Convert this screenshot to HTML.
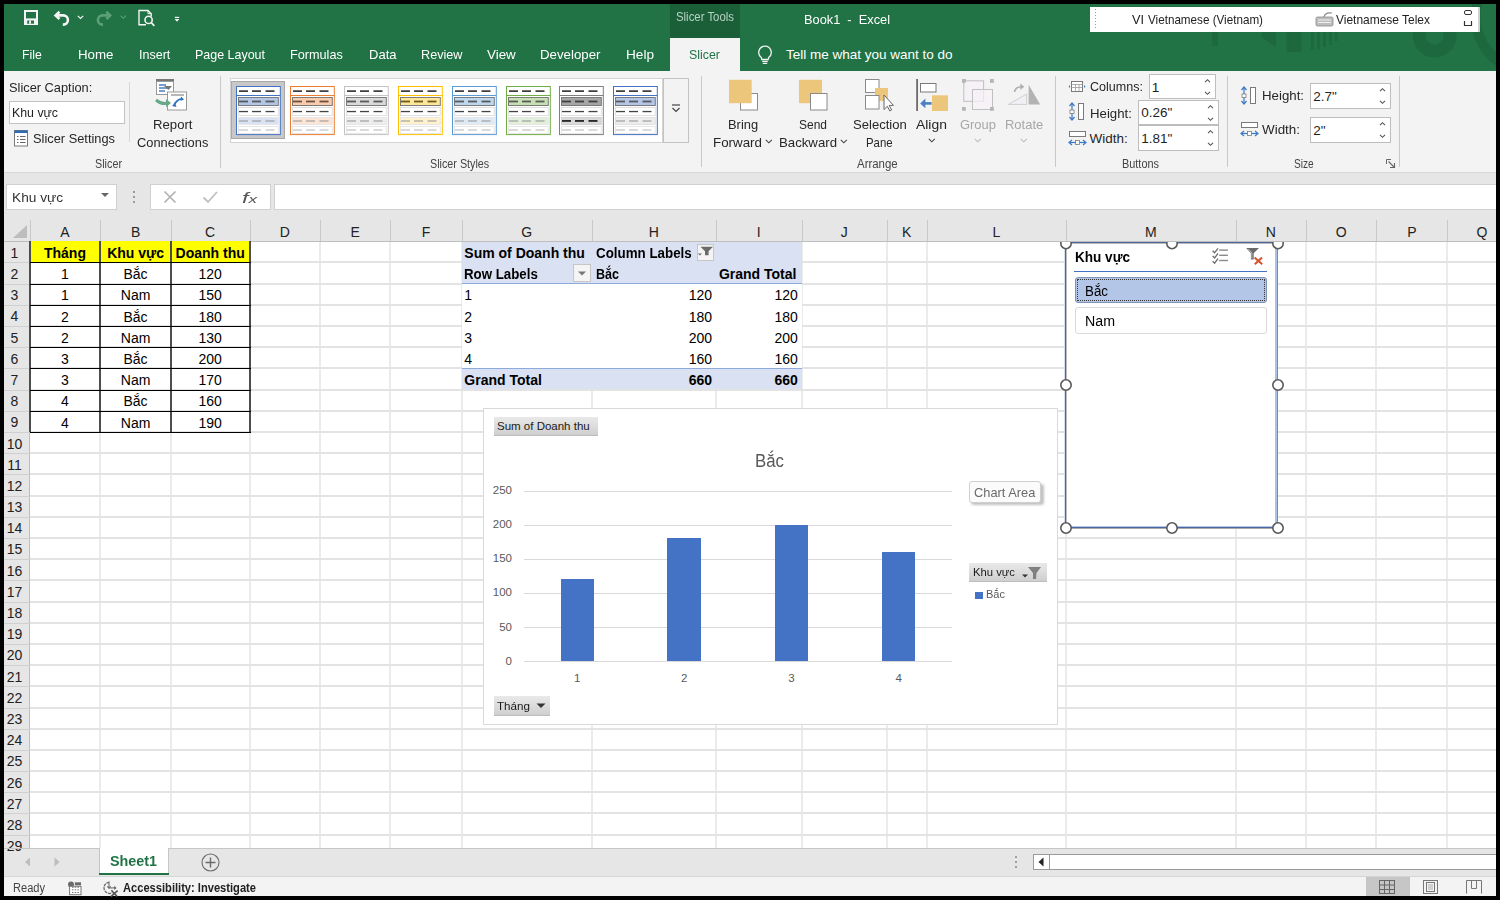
<!DOCTYPE html><html><head><meta charset="utf-8"><style>
html,body{margin:0;padding:0;}
body{width:1500px;height:900px;overflow:hidden;position:relative;background:#000;font-family:"Liberation Sans", sans-serif;}
.a{position:absolute;box-sizing:border-box;}
svg.a{overflow:visible;}
.t{position:absolute;white-space:nowrap;transform-origin:0 0;font-family:"Liberation Sans", sans-serif;}
</style></head><body>
<div class="a" style="left:4.00px;top:4.00px;width:1492.00px;height:67.00px;background:#217346"></div>
<svg class="a" style="left:1150px;top:4px" width="346" height="67" viewBox="0 0 346 67"><circle cx="284.6" cy="31.5" r="15.5" fill="none" stroke="#1e6840" stroke-width="13"/><rect x="46.8" y="22" width="4" height="4" fill="#1e6840"/><rect x="61.8" y="22" width="6" height="20" fill="#1e6840"/><path d="M111.5 22 H126 V43 L111.5 33 Z" fill="#1e6840"/><rect x="136.5" y="22" width="15" height="26" fill="#1e6840"/><rect x="161" y="22" width="3" height="24" fill="#1e6840"/><rect x="167" y="22" width="3" height="23" fill="#1e6840"/><rect x="173" y="22" width="3" height="21" fill="#1e6840"/><rect x="179" y="22" width="3" height="19" fill="#1e6840"/><rect x="185" y="22" width="2.5" height="15" fill="#1e6840"/><path d="M322 0 A60 60 0 0 0 346 62 L346 48 A48 48 0 0 1 332 0 Z" fill="#1e6840"/></svg>
<div class="a" style="left:670.00px;top:4.00px;width:70.00px;height:34.00px;background:#1b5f39"></div>
<div class="a" style="left:670.00px;top:38.00px;width:70.00px;height:33.00px;background:#f3f3f3"></div>
<div class="a" style="left:4.00px;top:71.00px;width:1492.00px;height:101.00px;background:#f3f3f3"></div>
<div class="a" style="left:4.00px;top:172.00px;width:1492.00px;height:1.00px;background:#d6d6d6"></div>
<div class="a" style="left:4.00px;top:173.00px;width:1492.00px;height:68.00px;background:#e6e6e6"></div>
<div class="a" style="left:4.00px;top:241.00px;width:25.50px;height:607.00px;background:#e6e6e6"></div>
<div class="a" style="left:29.50px;top:241.00px;width:1466.50px;height:607.00px;background:#ffffff"></div>
<div class="a" style="left:4.00px;top:848.00px;width:1492.00px;height:28.00px;background:#e6e6e6"></div>
<div class="a" style="left:4.00px;top:876.00px;width:1492.00px;height:20.00px;background:#f3f3f3"></div>
<span class="t" style="left:676.00px;top:11.34px;font-size:12px;line-height:12px;font-weight:400;color:#b7d3c2;transform:scaleX(0.9486);">Slicer Tools</span>
<span class="t" style="left:804.00px;top:12.57px;font-size:13.5px;line-height:13.5px;font-weight:400;color:#ffffff;transform:scaleX(0.9472);">Book1&nbsp;&nbsp;-&nbsp;&nbsp;Excel</span>
<div class="a" style="left:1090.00px;top:6.50px;width:390.00px;height:25.00px;background:#ffffff;border-right:2px solid #d0d0d0"></div>
<span class="t" style="left:1131.50px;top:13.00px;font-size:13px;line-height:13px;font-weight:400;color:#222;transform:scaleX(0.9759);">VI</span>
<span class="t" style="left:1148.00px;top:13.00px;font-size:13px;line-height:13px;font-weight:400;color:#222;transform:scaleX(0.8975);">Vietnamese (Vietnam)</span>
<span class="t" style="left:1336.00px;top:13.00px;font-size:13px;line-height:13px;font-weight:400;color:#222;transform:scaleX(0.9203);">Vietnamese Telex</span>
<span class="t" style="left:22.30px;top:47.57px;font-size:13.5px;line-height:13.5px;font-weight:400;color:#ffffff;transform:scaleX(0.9051);">File</span>
<span class="t" style="left:78.00px;top:47.57px;font-size:13.5px;line-height:13.5px;font-weight:400;color:#ffffff;transform:scaleX(0.9857);">Home</span>
<span class="t" style="left:138.70px;top:47.57px;font-size:13.5px;line-height:13.5px;font-weight:400;color:#ffffff;transform:scaleX(0.9270);">Insert</span>
<span class="t" style="left:195.00px;top:47.57px;font-size:13.5px;line-height:13.5px;font-weight:400;color:#ffffff;transform:scaleX(0.9233);">Page Layout</span>
<span class="t" style="left:290.40px;top:47.57px;font-size:13.5px;line-height:13.5px;font-weight:400;color:#ffffff;transform:scaleX(0.9384);">Formulas</span>
<span class="t" style="left:368.50px;top:47.57px;font-size:13.5px;line-height:13.5px;font-weight:400;color:#ffffff;transform:scaleX(0.9639);">Data</span>
<span class="t" style="left:421.30px;top:47.57px;font-size:13.5px;line-height:13.5px;font-weight:400;color:#ffffff;transform:scaleX(0.9375);">Review</span>
<span class="t" style="left:486.80px;top:47.57px;font-size:13.5px;line-height:13.5px;font-weight:400;color:#ffffff;transform:scaleX(0.9920);">View</span>
<span class="t" style="left:540.30px;top:47.57px;font-size:13.5px;line-height:13.5px;font-weight:400;color:#ffffff;transform:scaleX(0.9830);">Developer</span>
<span class="t" style="left:626.00px;top:47.57px;font-size:13.5px;line-height:13.5px;font-weight:400;color:#ffffff;transform:scaleX(1.0084);">Help</span>
<span class="t" style="left:689.00px;top:47.57px;font-size:13.5px;line-height:13.5px;font-weight:400;color:#217346;transform:scaleX(0.9181);">Slicer</span>
<span class="t" style="left:786.00px;top:47.57px;font-size:13.5px;line-height:13.5px;font-weight:400;color:#ffffff;">Tell me what you want to do</span>
<div class="a" style="left:99.00px;top:241.00px;width:2.00px;height:607.00px;background:#ebebeb"></div>
<div class="a" style="left:170.00px;top:241.00px;width:2.00px;height:607.00px;background:#ebebeb"></div>
<div class="a" style="left:249.00px;top:241.00px;width:2.00px;height:607.00px;background:#ebebeb"></div>
<div class="a" style="left:319.00px;top:241.00px;width:2.00px;height:607.00px;background:#ebebeb"></div>
<div class="a" style="left:389.00px;top:241.00px;width:2.00px;height:607.00px;background:#ebebeb"></div>
<div class="a" style="left:461.00px;top:241.00px;width:2.00px;height:607.00px;background:#ebebeb"></div>
<div class="a" style="left:591.00px;top:241.00px;width:2.00px;height:607.00px;background:#ebebeb"></div>
<div class="a" style="left:715.00px;top:241.00px;width:2.00px;height:607.00px;background:#ebebeb"></div>
<div class="a" style="left:801.00px;top:241.00px;width:2.00px;height:607.00px;background:#ebebeb"></div>
<div class="a" style="left:886.00px;top:241.00px;width:2.00px;height:607.00px;background:#ebebeb"></div>
<div class="a" style="left:926.00px;top:241.00px;width:2.00px;height:607.00px;background:#ebebeb"></div>
<div class="a" style="left:1065.00px;top:241.00px;width:2.00px;height:607.00px;background:#ebebeb"></div>
<div class="a" style="left:1235.00px;top:241.00px;width:2.00px;height:607.00px;background:#ebebeb"></div>
<div class="a" style="left:1305.00px;top:241.00px;width:2.00px;height:607.00px;background:#ebebeb"></div>
<div class="a" style="left:1375.00px;top:241.00px;width:2.00px;height:607.00px;background:#ebebeb"></div>
<div class="a" style="left:1446.00px;top:241.00px;width:2.00px;height:607.00px;background:#ebebeb"></div>
<div class="a" style="left:29.50px;top:261.00px;width:1466.50px;height:2.00px;background:#e3e3e3"></div>
<div class="a" style="left:29.50px;top:283.00px;width:1466.50px;height:2.00px;background:#e3e3e3"></div>
<div class="a" style="left:29.50px;top:304.00px;width:1466.50px;height:2.00px;background:#e3e3e3"></div>
<div class="a" style="left:29.50px;top:325.00px;width:1466.50px;height:2.00px;background:#e3e3e3"></div>
<div class="a" style="left:29.50px;top:346.00px;width:1466.50px;height:2.00px;background:#e3e3e3"></div>
<div class="a" style="left:29.50px;top:367.00px;width:1466.50px;height:2.00px;background:#e3e3e3"></div>
<div class="a" style="left:29.50px;top:389.00px;width:1466.50px;height:2.00px;background:#e3e3e3"></div>
<div class="a" style="left:29.50px;top:410.00px;width:1466.50px;height:2.00px;background:#e3e3e3"></div>
<div class="a" style="left:29.50px;top:431.00px;width:1466.50px;height:2.00px;background:#e3e3e3"></div>
<div class="a" style="left:29.50px;top:452.00px;width:1466.50px;height:2.00px;background:#e3e3e3"></div>
<div class="a" style="left:29.50px;top:473.00px;width:1466.50px;height:2.00px;background:#e3e3e3"></div>
<div class="a" style="left:29.50px;top:495.00px;width:1466.50px;height:2.00px;background:#e3e3e3"></div>
<div class="a" style="left:29.50px;top:516.00px;width:1466.50px;height:2.00px;background:#e3e3e3"></div>
<div class="a" style="left:29.50px;top:537.00px;width:1466.50px;height:2.00px;background:#e3e3e3"></div>
<div class="a" style="left:29.50px;top:558.00px;width:1466.50px;height:2.00px;background:#e3e3e3"></div>
<div class="a" style="left:29.50px;top:579.00px;width:1466.50px;height:2.00px;background:#e3e3e3"></div>
<div class="a" style="left:29.50px;top:601.00px;width:1466.50px;height:2.00px;background:#e3e3e3"></div>
<div class="a" style="left:29.50px;top:622.00px;width:1466.50px;height:2.00px;background:#e3e3e3"></div>
<div class="a" style="left:29.50px;top:643.00px;width:1466.50px;height:2.00px;background:#e3e3e3"></div>
<div class="a" style="left:29.50px;top:664.00px;width:1466.50px;height:2.00px;background:#e3e3e3"></div>
<div class="a" style="left:29.50px;top:685.00px;width:1466.50px;height:2.00px;background:#e3e3e3"></div>
<div class="a" style="left:29.50px;top:707.00px;width:1466.50px;height:2.00px;background:#e3e3e3"></div>
<div class="a" style="left:29.50px;top:728.00px;width:1466.50px;height:2.00px;background:#e3e3e3"></div>
<div class="a" style="left:29.50px;top:749.00px;width:1466.50px;height:2.00px;background:#e3e3e3"></div>
<div class="a" style="left:29.50px;top:770.00px;width:1466.50px;height:2.00px;background:#e3e3e3"></div>
<div class="a" style="left:29.50px;top:791.00px;width:1466.50px;height:2.00px;background:#e3e3e3"></div>
<div class="a" style="left:29.50px;top:812.00px;width:1466.50px;height:2.00px;background:#e3e3e3"></div>
<div class="a" style="left:29.50px;top:834.00px;width:1466.50px;height:2.00px;background:#e3e3e3"></div>
<div class="a" style="left:29.50px;top:220.00px;width:1.00px;height:21.00px;background:#c8c8c8"></div>
<div class="a" style="left:99.50px;top:220.00px;width:1.00px;height:21.00px;background:#c8c8c8"></div>
<div class="a" style="left:170.50px;top:220.00px;width:1.00px;height:21.00px;background:#c8c8c8"></div>
<div class="a" style="left:249.50px;top:220.00px;width:1.00px;height:21.00px;background:#c8c8c8"></div>
<div class="a" style="left:319.50px;top:220.00px;width:1.00px;height:21.00px;background:#c8c8c8"></div>
<div class="a" style="left:389.50px;top:220.00px;width:1.00px;height:21.00px;background:#c8c8c8"></div>
<div class="a" style="left:461.50px;top:220.00px;width:1.00px;height:21.00px;background:#c8c8c8"></div>
<div class="a" style="left:591.50px;top:220.00px;width:1.00px;height:21.00px;background:#c8c8c8"></div>
<div class="a" style="left:715.50px;top:220.00px;width:1.00px;height:21.00px;background:#c8c8c8"></div>
<div class="a" style="left:801.50px;top:220.00px;width:1.00px;height:21.00px;background:#c8c8c8"></div>
<div class="a" style="left:886.50px;top:220.00px;width:1.00px;height:21.00px;background:#c8c8c8"></div>
<div class="a" style="left:926.50px;top:220.00px;width:1.00px;height:21.00px;background:#c8c8c8"></div>
<div class="a" style="left:1065.50px;top:220.00px;width:1.00px;height:21.00px;background:#c8c8c8"></div>
<div class="a" style="left:1235.50px;top:220.00px;width:1.00px;height:21.00px;background:#c8c8c8"></div>
<div class="a" style="left:1305.50px;top:220.00px;width:1.00px;height:21.00px;background:#c8c8c8"></div>
<div class="a" style="left:1375.50px;top:220.00px;width:1.00px;height:21.00px;background:#c8c8c8"></div>
<div class="a" style="left:1446.50px;top:220.00px;width:1.00px;height:21.00px;background:#c8c8c8"></div>
<div class="a" style="left:4.00px;top:240.50px;width:1492.00px;height:1.00px;background:#bdbdbd"></div>
<div class="a" style="left:29.00px;top:241.00px;width:1.00px;height:607.00px;background:#bdbdbd"></div>
<svg class="a" style="left:12px;top:225px;" width="16" height="14" viewBox="0 0 16 14"><path d="M15 0 L15 13 L1 13 Z" fill="#bdbdbd"/></svg>
<span class="t" style="left:60.28px;top:224.65px;font-size:14px;line-height:14px;font-weight:400;color:#222;">A</span>
<span class="t" style="left:130.88px;top:224.65px;font-size:14px;line-height:14px;font-weight:400;color:#222;">B</span>
<span class="t" style="left:205.09px;top:224.65px;font-size:14px;line-height:14px;font-weight:400;color:#222;">C</span>
<span class="t" style="left:279.74px;top:224.65px;font-size:14px;line-height:14px;font-weight:400;color:#222;">D</span>
<span class="t" style="left:350.53px;top:224.65px;font-size:14px;line-height:14px;font-weight:400;color:#222;">E</span>
<span class="t" style="left:421.72px;top:224.65px;font-size:14px;line-height:14px;font-weight:400;color:#222;">F</span>
<span class="t" style="left:521.25px;top:224.65px;font-size:14px;line-height:14px;font-weight:400;color:#222;">G</span>
<span class="t" style="left:648.69px;top:224.65px;font-size:14px;line-height:14px;font-weight:400;color:#222;">H</span>
<span class="t" style="left:756.70px;top:224.65px;font-size:14px;line-height:14px;font-weight:400;color:#222;">I</span>
<span class="t" style="left:840.65px;top:224.65px;font-size:14px;line-height:14px;font-weight:400;color:#222;">J</span>
<span class="t" style="left:901.98px;top:224.65px;font-size:14px;line-height:14px;font-weight:400;color:#222;">K</span>
<span class="t" style="left:992.50px;top:224.65px;font-size:14px;line-height:14px;font-weight:400;color:#222;">L</span>
<span class="t" style="left:1145.01px;top:224.65px;font-size:14px;line-height:14px;font-weight:400;color:#222;">M</span>
<span class="t" style="left:1265.79px;top:224.65px;font-size:14px;line-height:14px;font-weight:400;color:#222;">N</span>
<span class="t" style="left:1335.85px;top:224.65px;font-size:14px;line-height:14px;font-weight:400;color:#222;">O</span>
<span class="t" style="left:1407.23px;top:224.65px;font-size:14px;line-height:14px;font-weight:400;color:#222;">P</span>
<span class="t" style="left:1476.55px;top:224.65px;font-size:14px;line-height:14px;font-weight:400;color:#222;">Q</span>
<span class="t" style="left:10.60px;top:245.75px;font-size:14px;line-height:14px;font-weight:400;color:#222;">1</span>
<span class="t" style="left:10.60px;top:266.94px;font-size:14px;line-height:14px;font-weight:400;color:#222;">2</span>
<span class="t" style="left:10.60px;top:288.14px;font-size:14px;line-height:14px;font-weight:400;color:#222;">3</span>
<span class="t" style="left:10.60px;top:309.33px;font-size:14px;line-height:14px;font-weight:400;color:#222;">4</span>
<span class="t" style="left:10.60px;top:330.53px;font-size:14px;line-height:14px;font-weight:400;color:#222;">5</span>
<span class="t" style="left:10.60px;top:351.73px;font-size:14px;line-height:14px;font-weight:400;color:#222;">6</span>
<span class="t" style="left:10.60px;top:372.92px;font-size:14px;line-height:14px;font-weight:400;color:#222;">7</span>
<span class="t" style="left:10.60px;top:394.12px;font-size:14px;line-height:14px;font-weight:400;color:#222;">8</span>
<span class="t" style="left:10.60px;top:415.31px;font-size:14px;line-height:14px;font-weight:400;color:#222;">9</span>
<span class="t" style="left:6.71px;top:436.51px;font-size:14px;line-height:14px;font-weight:400;color:#222;">10</span>
<span class="t" style="left:7.23px;top:457.70px;font-size:14px;line-height:14px;font-weight:400;color:#222;">11</span>
<span class="t" style="left:6.71px;top:478.90px;font-size:14px;line-height:14px;font-weight:400;color:#222;">12</span>
<span class="t" style="left:6.71px;top:500.10px;font-size:14px;line-height:14px;font-weight:400;color:#222;">13</span>
<span class="t" style="left:6.71px;top:521.29px;font-size:14px;line-height:14px;font-weight:400;color:#222;">14</span>
<span class="t" style="left:6.71px;top:542.49px;font-size:14px;line-height:14px;font-weight:400;color:#222;">15</span>
<span class="t" style="left:6.71px;top:563.69px;font-size:14px;line-height:14px;font-weight:400;color:#222;">16</span>
<span class="t" style="left:6.71px;top:584.88px;font-size:14px;line-height:14px;font-weight:400;color:#222;">17</span>
<span class="t" style="left:6.71px;top:606.08px;font-size:14px;line-height:14px;font-weight:400;color:#222;">18</span>
<span class="t" style="left:6.71px;top:627.27px;font-size:14px;line-height:14px;font-weight:400;color:#222;">19</span>
<span class="t" style="left:6.71px;top:648.47px;font-size:14px;line-height:14px;font-weight:400;color:#222;">20</span>
<span class="t" style="left:6.71px;top:669.67px;font-size:14px;line-height:14px;font-weight:400;color:#222;">21</span>
<span class="t" style="left:6.71px;top:690.86px;font-size:14px;line-height:14px;font-weight:400;color:#222;">22</span>
<span class="t" style="left:6.71px;top:712.06px;font-size:14px;line-height:14px;font-weight:400;color:#222;">23</span>
<span class="t" style="left:6.71px;top:733.25px;font-size:14px;line-height:14px;font-weight:400;color:#222;">24</span>
<span class="t" style="left:6.71px;top:754.45px;font-size:14px;line-height:14px;font-weight:400;color:#222;">25</span>
<span class="t" style="left:6.71px;top:775.65px;font-size:14px;line-height:14px;font-weight:400;color:#222;">26</span>
<span class="t" style="left:6.71px;top:796.84px;font-size:14px;line-height:14px;font-weight:400;color:#222;">27</span>
<span class="t" style="left:6.71px;top:818.04px;font-size:14px;line-height:14px;font-weight:400;color:#222;">28</span>
<span class="t" style="left:6.71px;top:839.23px;font-size:14px;line-height:14px;font-weight:400;color:#222;">29</span>
<div class="a" style="left:4.00px;top:261.50px;width:25.50px;height:1.00px;background:#d0d0d0"></div>
<div class="a" style="left:4.00px;top:283.50px;width:25.50px;height:1.00px;background:#d0d0d0"></div>
<div class="a" style="left:4.00px;top:304.50px;width:25.50px;height:1.00px;background:#d0d0d0"></div>
<div class="a" style="left:4.00px;top:325.50px;width:25.50px;height:1.00px;background:#d0d0d0"></div>
<div class="a" style="left:4.00px;top:346.50px;width:25.50px;height:1.00px;background:#d0d0d0"></div>
<div class="a" style="left:4.00px;top:367.50px;width:25.50px;height:1.00px;background:#d0d0d0"></div>
<div class="a" style="left:4.00px;top:389.50px;width:25.50px;height:1.00px;background:#d0d0d0"></div>
<div class="a" style="left:4.00px;top:410.50px;width:25.50px;height:1.00px;background:#d0d0d0"></div>
<div class="a" style="left:4.00px;top:431.50px;width:25.50px;height:1.00px;background:#d0d0d0"></div>
<div class="a" style="left:4.00px;top:452.50px;width:25.50px;height:1.00px;background:#d0d0d0"></div>
<div class="a" style="left:4.00px;top:473.50px;width:25.50px;height:1.00px;background:#d0d0d0"></div>
<div class="a" style="left:4.00px;top:495.50px;width:25.50px;height:1.00px;background:#d0d0d0"></div>
<div class="a" style="left:4.00px;top:516.50px;width:25.50px;height:1.00px;background:#d0d0d0"></div>
<div class="a" style="left:4.00px;top:537.50px;width:25.50px;height:1.00px;background:#d0d0d0"></div>
<div class="a" style="left:4.00px;top:558.50px;width:25.50px;height:1.00px;background:#d0d0d0"></div>
<div class="a" style="left:4.00px;top:579.50px;width:25.50px;height:1.00px;background:#d0d0d0"></div>
<div class="a" style="left:4.00px;top:601.50px;width:25.50px;height:1.00px;background:#d0d0d0"></div>
<div class="a" style="left:4.00px;top:622.50px;width:25.50px;height:1.00px;background:#d0d0d0"></div>
<div class="a" style="left:4.00px;top:643.50px;width:25.50px;height:1.00px;background:#d0d0d0"></div>
<div class="a" style="left:4.00px;top:664.50px;width:25.50px;height:1.00px;background:#d0d0d0"></div>
<div class="a" style="left:4.00px;top:685.50px;width:25.50px;height:1.00px;background:#d0d0d0"></div>
<div class="a" style="left:4.00px;top:707.50px;width:25.50px;height:1.00px;background:#d0d0d0"></div>
<div class="a" style="left:4.00px;top:728.50px;width:25.50px;height:1.00px;background:#d0d0d0"></div>
<div class="a" style="left:4.00px;top:749.50px;width:25.50px;height:1.00px;background:#d0d0d0"></div>
<div class="a" style="left:4.00px;top:770.50px;width:25.50px;height:1.00px;background:#d0d0d0"></div>
<div class="a" style="left:4.00px;top:791.50px;width:25.50px;height:1.00px;background:#d0d0d0"></div>
<div class="a" style="left:4.00px;top:812.50px;width:25.50px;height:1.00px;background:#d0d0d0"></div>
<div class="a" style="left:4.00px;top:834.50px;width:25.50px;height:1.00px;background:#d0d0d0"></div>
<div class="a" style="left:4.00px;top:848.00px;width:1492.00px;height:1.00px;background:#c6c6c6"></div>
<div class="a" style="left:99.00px;top:848.00px;width:69.60px;height:27.00px;background:#ffffff;border-left:1px solid #c6c6c6;border-right:1px solid #c6c6c6"></div>
<div class="a" style="left:99.00px;top:873.00px;width:69.60px;height:2.00px;background:#217346"></div>
<span class="t" style="left:110.00px;top:854.15px;font-size:14px;line-height:14px;font-weight:700;color:#217346;transform:scaleX(1.0235);">Sheet1</span>
<div class="a" style="left:4.00px;top:876.00px;width:1492.00px;height:1.00px;background:#d6d6d6"></div>
<span class="t" style="left:12.50px;top:882.42px;font-size:12.5px;line-height:12.5px;font-weight:400;color:#444;transform:scaleX(0.8854);">Ready</span>
<span class="t" style="left:123.00px;top:882.42px;font-size:12.5px;line-height:12.5px;font-weight:700;color:#222;transform:scaleX(0.8904);">Accessibility: Investigate</span>
<div class="a" style="left:6.00px;top:184.00px;width:111.00px;height:25.50px;background:#fff;border:1px solid #d0d0d0"></div>
<span class="t" style="left:11.60px;top:190.57px;font-size:13.5px;line-height:13.5px;font-weight:400;color:#333;transform:scaleX(1.0137);">Khu vực</span>
<svg class="a" style="left:101px;top:193px;" width="10" height="6" viewBox="0 0 10 6"><path d="M0 0 L8 0 L4 4Z" fill="#666"/></svg>
<div class="a" style="left:133.00px;top:191.00px;width:2.00px;height:2.00px;background:#9a9a9a"></div>
<div class="a" style="left:133.00px;top:196.00px;width:2.00px;height:2.00px;background:#9a9a9a"></div>
<div class="a" style="left:133.00px;top:201.00px;width:2.00px;height:2.00px;background:#9a9a9a"></div>
<div class="a" style="left:150.00px;top:184.00px;width:120.50px;height:25.50px;background:#fff;border:1px solid #d0d0d0"></div>
<svg class="a" style="left:163px;top:190px;" width="14" height="14" viewBox="0 0 14 14"><path d="M1.5 1.5 L12.5 12.5 M12.5 1.5 L1.5 12.5" stroke="#b0b0b0" stroke-width="1.6" fill="none"/></svg>
<svg class="a" style="left:202px;top:190px;" width="16" height="14" viewBox="0 0 16 14"><path d="M1.5 7.5 L6 12 L15 2" stroke="#c0c0c0" stroke-width="1.8" fill="none"/></svg>
<span class="t" style="left:242.00px;top:190.30px;font-size:15px;line-height:15px;font-weight:400;color:#555;transform:scaleX(1.5509);font-family:"Liberation Serif",serif;"><i>f</i><i style="font-size:11px">x</i></span>
<div class="a" style="left:274.00px;top:184.00px;width:1222.00px;height:25.50px;background:#fff;border:1px solid #d0d0d0;border-right:none"></div>
<div class="a" style="left:30.00px;top:241.20px;width:219.60px;height:21.20px;background:#ffff00"></div>
<div class="a" style="left:29.00px;top:241.20px;width:2.00px;height:190.76px;background:#4d4d4d"></div>
<div class="a" style="left:99.00px;top:241.20px;width:2.00px;height:190.76px;background:#4d4d4d"></div>
<div class="a" style="left:170.00px;top:241.20px;width:2.00px;height:190.76px;background:#4d4d4d"></div>
<div class="a" style="left:249.00px;top:241.20px;width:2.00px;height:190.76px;background:#4d4d4d"></div>
<div class="a" style="left:29.50px;top:240.50px;width:221.10px;height:1.50px;background:transparent"></div>
<div class="a" style="left:29.50px;top:261.50px;width:221.10px;height:1.50px;background:#000"></div>
<div class="a" style="left:29.50px;top:283.50px;width:221.10px;height:1.50px;background:#000"></div>
<div class="a" style="left:29.50px;top:304.50px;width:221.10px;height:1.50px;background:#000"></div>
<div class="a" style="left:29.50px;top:325.50px;width:221.10px;height:1.50px;background:#000"></div>
<div class="a" style="left:29.50px;top:346.50px;width:221.10px;height:1.50px;background:#000"></div>
<div class="a" style="left:29.50px;top:367.50px;width:221.10px;height:1.50px;background:#000"></div>
<div class="a" style="left:29.50px;top:389.50px;width:221.10px;height:1.50px;background:#000"></div>
<div class="a" style="left:29.50px;top:410.50px;width:221.10px;height:1.50px;background:#000"></div>
<div class="a" style="left:29.50px;top:431.50px;width:221.10px;height:1.50px;background:#000"></div>
<span class="t" style="left:43.95px;top:245.94px;font-size:14px;line-height:14px;font-weight:700;color:#000;">Tháng</span>
<span class="t" style="left:107.14px;top:245.94px;font-size:14px;line-height:14px;font-weight:700;color:#000;">Khu vực</span>
<span class="t" style="left:175.54px;top:245.94px;font-size:14px;line-height:14px;font-weight:700;color:#000;">Doanh thu</span>
<span class="t" style="left:61.05px;top:267.14px;font-size:14px;line-height:14px;font-weight:400;color:#000;">1</span>
<span class="t" style="left:123.49px;top:267.14px;font-size:14px;line-height:14px;font-weight:400;color:#000;">Bắc</span>
<span class="t" style="left:198.47px;top:267.14px;font-size:14px;line-height:14px;font-weight:400;color:#000;">120</span>
<span class="t" style="left:61.05px;top:288.34px;font-size:14px;line-height:14px;font-weight:400;color:#000;">1</span>
<span class="t" style="left:120.77px;top:288.34px;font-size:14px;line-height:14px;font-weight:400;color:#000;">Nam</span>
<span class="t" style="left:198.47px;top:288.34px;font-size:14px;line-height:14px;font-weight:400;color:#000;">150</span>
<span class="t" style="left:61.05px;top:309.53px;font-size:14px;line-height:14px;font-weight:400;color:#000;">2</span>
<span class="t" style="left:123.49px;top:309.53px;font-size:14px;line-height:14px;font-weight:400;color:#000;">Bắc</span>
<span class="t" style="left:198.47px;top:309.53px;font-size:14px;line-height:14px;font-weight:400;color:#000;">180</span>
<span class="t" style="left:61.05px;top:330.73px;font-size:14px;line-height:14px;font-weight:400;color:#000;">2</span>
<span class="t" style="left:120.77px;top:330.73px;font-size:14px;line-height:14px;font-weight:400;color:#000;">Nam</span>
<span class="t" style="left:198.47px;top:330.73px;font-size:14px;line-height:14px;font-weight:400;color:#000;">130</span>
<span class="t" style="left:61.05px;top:351.93px;font-size:14px;line-height:14px;font-weight:400;color:#000;">3</span>
<span class="t" style="left:123.49px;top:351.93px;font-size:14px;line-height:14px;font-weight:400;color:#000;">Bắc</span>
<span class="t" style="left:198.47px;top:351.93px;font-size:14px;line-height:14px;font-weight:400;color:#000;">200</span>
<span class="t" style="left:61.05px;top:373.12px;font-size:14px;line-height:14px;font-weight:400;color:#000;">3</span>
<span class="t" style="left:120.77px;top:373.12px;font-size:14px;line-height:14px;font-weight:400;color:#000;">Nam</span>
<span class="t" style="left:198.47px;top:373.12px;font-size:14px;line-height:14px;font-weight:400;color:#000;">170</span>
<span class="t" style="left:61.05px;top:394.32px;font-size:14px;line-height:14px;font-weight:400;color:#000;">4</span>
<span class="t" style="left:123.49px;top:394.32px;font-size:14px;line-height:14px;font-weight:400;color:#000;">Bắc</span>
<span class="t" style="left:198.47px;top:394.32px;font-size:14px;line-height:14px;font-weight:400;color:#000;">160</span>
<span class="t" style="left:61.05px;top:415.51px;font-size:14px;line-height:14px;font-weight:400;color:#000;">4</span>
<span class="t" style="left:120.77px;top:415.51px;font-size:14px;line-height:14px;font-weight:400;color:#000;">Nam</span>
<span class="t" style="left:198.47px;top:415.51px;font-size:14px;line-height:14px;font-weight:400;color:#000;">190</span>
<div class="a" style="left:462.10px;top:241.70px;width:340.00px;height:41.89px;background:#d9e1f2"></div>
<div class="a" style="left:462.10px;top:283.59px;width:340.00px;height:84.78px;background:#ffffff"></div>
<div class="a" style="left:462.10px;top:283.09px;width:340.00px;height:1.20px;background:#8ea9db"></div>
<div class="a" style="left:462.10px;top:367.88px;width:340.00px;height:21.20px;background:#d9e1f2;border-top:1.2px solid #8ea9db"></div>
<span class="t" style="left:464.30px;top:245.94px;font-size:14px;line-height:14px;font-weight:700;color:#000;">Sum of Doanh thu</span>
<span class="t" style="left:595.50px;top:245.94px;font-size:14px;line-height:14px;font-weight:700;color:#000;transform:scaleX(0.9536);">Column Labels</span>
<span class="t" style="left:464.30px;top:267.14px;font-size:14px;line-height:14px;font-weight:700;color:#000;transform:scaleX(0.9486);">Row Labels</span>
<span class="t" style="left:595.50px;top:267.14px;font-size:14px;line-height:14px;font-weight:700;color:#000;transform:scaleX(0.8954);">Bắc</span>
<span class="t" style="left:718.90px;top:267.14px;font-size:14px;line-height:14px;font-weight:700;color:#000;">Grand Total</span>
<div class="a" style="left:696.70px;top:243.90px;width:17.70px;height:16.70px;background:#f4f4f4;border:1px solid #c6c6c6"></div>
<svg class="a" style="left:697px;top:245px;" width="17" height="14" viewBox="0 0 17 14"><path d="M3.5 1.8 H16 L11.6 6.3 V10.3 H8 V6.3 Z" fill="#6b6b6b"/><path d="M0.8 8.4 H5 L2.9 10.6 Z" fill="#6b6b6b"/></svg>
<div class="a" style="left:573.30px;top:264.30px;width:17.80px;height:17.80px;background:#f4f4f4;border:1px solid #c6c6c6"></div>
<svg class="a" style="left:577px;top:271.2px;" width="10" height="6" viewBox="0 0 10 6"><path d="M1 0.5 L9 0.5 L5 4.5Z" fill="#777"/></svg>
<span class="t" style="left:464.30px;top:288.34px;font-size:14px;line-height:14px;font-weight:400;color:#000;">1</span>
<span class="t" style="left:688.64px;top:288.34px;font-size:14px;line-height:14px;font-weight:400;color:#000;">120</span>
<span class="t" style="left:774.44px;top:288.34px;font-size:14px;line-height:14px;font-weight:400;color:#000;">120</span>
<span class="t" style="left:464.30px;top:309.53px;font-size:14px;line-height:14px;font-weight:400;color:#000;">2</span>
<span class="t" style="left:688.64px;top:309.53px;font-size:14px;line-height:14px;font-weight:400;color:#000;">180</span>
<span class="t" style="left:774.44px;top:309.53px;font-size:14px;line-height:14px;font-weight:400;color:#000;">180</span>
<span class="t" style="left:464.30px;top:330.73px;font-size:14px;line-height:14px;font-weight:400;color:#000;">3</span>
<span class="t" style="left:688.64px;top:330.73px;font-size:14px;line-height:14px;font-weight:400;color:#000;">200</span>
<span class="t" style="left:774.44px;top:330.73px;font-size:14px;line-height:14px;font-weight:400;color:#000;">200</span>
<span class="t" style="left:464.30px;top:351.93px;font-size:14px;line-height:14px;font-weight:400;color:#000;">4</span>
<span class="t" style="left:688.64px;top:351.93px;font-size:14px;line-height:14px;font-weight:400;color:#000;">160</span>
<span class="t" style="left:774.44px;top:351.93px;font-size:14px;line-height:14px;font-weight:400;color:#000;">160</span>
<span class="t" style="left:464.30px;top:373.12px;font-size:14px;line-height:14px;font-weight:700;color:#000;">Grand Total</span>
<span class="t" style="left:688.64px;top:373.12px;font-size:14px;line-height:14px;font-weight:700;color:#000;">660</span>
<span class="t" style="left:774.44px;top:373.12px;font-size:14px;line-height:14px;font-weight:700;color:#000;">660</span>
<div class="a" style="left:482.50px;top:408.20px;width:575.50px;height:316.80px;background:#ffffff;border:1px solid #d9d9d9"></div>
<div class="a" style="left:493.50px;top:416.60px;width:104.10px;height:19.10px;background:linear-gradient(#e9e9e9,#cfcfcf);border-bottom:1px solid #bdbdbd"></div>
<span class="t" style="left:497.00px;top:420.77px;font-size:11.5px;line-height:11.5px;font-weight:400;color:#1a1a1a;">Sum of Doanh thu</span>
<span class="t" style="left:755.00px;top:452.06px;font-size:18px;line-height:18px;font-weight:400;color:#595959;transform:scaleX(0.9345);">Bắc</span>
<div class="a" style="left:523.90px;top:660.50px;width:428.40px;height:1.00px;background:#d9d9d9"></div>
<span class="t" style="left:505.59px;top:655.67px;font-size:11.5px;line-height:11.5px;font-weight:400;color:#595959;">0</span>
<div class="a" style="left:523.90px;top:626.50px;width:428.40px;height:1.00px;background:#d9d9d9"></div>
<span class="t" style="left:499.20px;top:621.51px;font-size:11.5px;line-height:11.5px;font-weight:400;color:#595959;">50</span>
<div class="a" style="left:523.90px;top:592.50px;width:428.40px;height:1.00px;background:#d9d9d9"></div>
<span class="t" style="left:492.81px;top:587.35px;font-size:11.5px;line-height:11.5px;font-weight:400;color:#595959;">100</span>
<div class="a" style="left:523.90px;top:558.50px;width:428.40px;height:1.00px;background:#d9d9d9"></div>
<span class="t" style="left:492.81px;top:553.19px;font-size:11.5px;line-height:11.5px;font-weight:400;color:#595959;">150</span>
<div class="a" style="left:523.90px;top:524.50px;width:428.40px;height:1.00px;background:#d9d9d9"></div>
<span class="t" style="left:492.81px;top:519.03px;font-size:11.5px;line-height:11.5px;font-weight:400;color:#595959;">200</span>
<div class="a" style="left:523.90px;top:490.50px;width:428.40px;height:1.00px;background:#d9d9d9"></div>
<span class="t" style="left:492.81px;top:484.87px;font-size:11.5px;line-height:11.5px;font-weight:400;color:#595959;">250</span>
<div class="a" style="left:560.60px;top:579.42px;width:33.40px;height:81.98px;background:#4472c4"></div>
<span class="t" style="left:574.10px;top:672.77px;font-size:11.5px;line-height:11.5px;font-weight:400;color:#595959;">1</span>
<div class="a" style="left:667.40px;top:538.42px;width:33.40px;height:122.98px;background:#4472c4"></div>
<span class="t" style="left:680.90px;top:672.77px;font-size:11.5px;line-height:11.5px;font-weight:400;color:#595959;">2</span>
<div class="a" style="left:774.80px;top:524.76px;width:33.40px;height:136.64px;background:#4472c4"></div>
<span class="t" style="left:788.30px;top:672.77px;font-size:11.5px;line-height:11.5px;font-weight:400;color:#595959;">3</span>
<div class="a" style="left:882.00px;top:552.09px;width:33.40px;height:109.31px;background:#4472c4"></div>
<span class="t" style="left:895.50px;top:672.77px;font-size:11.5px;line-height:11.5px;font-weight:400;color:#595959;">4</span>
<div class="a" style="left:493.50px;top:696.40px;width:56.40px;height:19.20px;background:linear-gradient(#e9e9e9,#cfcfcf);border-bottom:1px solid #bdbdbd"></div>
<span class="t" style="left:497.00px;top:700.77px;font-size:11.5px;line-height:11.5px;font-weight:400;color:#1a1a1a;transform:scaleX(1.0120);">Tháng</span>
<svg class="a" style="left:535.8px;top:703.3px;" width="10" height="6" viewBox="0 0 10 6"><path d="M0.5 0.5 L9.5 0.5 L5 5Z" fill="#333"/></svg>
<div class="a" style="left:969.30px;top:563.00px;width:77.50px;height:19.00px;background:linear-gradient(#e9e9e9,#cfcfcf);border-bottom:1px solid #bdbdbd"></div>
<span class="t" style="left:973.00px;top:567.27px;font-size:11.5px;line-height:11.5px;font-weight:400;color:#1a1a1a;transform:scaleX(0.9799);">Khu vực</span>
<svg class="a" style="left:1020px;top:566px;" width="24" height="14" viewBox="0 0 24 14"><path d="M2 8.5 L8 8.5 L5 11.5Z" fill="#333"/><path d="M8 1 L21 1 L16.5 7 L16 13 L13 13 L13 7 Z" fill="#7f7f7f"/></svg>
<div class="a" style="left:975.20px;top:592.00px;width:7.50px;height:7.30px;background:#4472c4"></div>
<span class="t" style="left:986.00px;top:589.27px;font-size:11.5px;line-height:11.5px;font-weight:400;color:#595959;transform:scaleX(0.9582);">Bắc</span>
<div class="a" style="left:970.50px;top:483.50px;width:73.00px;height:21.50px;background:#9a9a9a;border-radius:3px;filter:blur(1px);opacity:.6"></div>
<div class="a" style="left:968.70px;top:481.20px;width:72.60px;height:21.50px;background:#fbfbfb;border:1px solid #cfcfcf;border-radius:3px"></div>
<span class="t" style="left:973.70px;top:486.20px;font-size:13px;line-height:13px;font-weight:400;color:#6a6a6a;transform:scaleX(0.9862);">Chart Area</span>
<div class="a" style="left:1065.00px;top:242.00px;width:213.00px;height:287.00px;background:#ffffff"></div>
<div class="a" style="left:1064.00px;top:242.00px;width:1.00px;height:287.00px;background:#d3dff3"></div>
<div class="a" style="left:1065.00px;top:242.00px;width:1.00px;height:287.00px;background:#4a67a0"></div>
<div class="a" style="left:1066.00px;top:243.00px;width:1.00px;height:284.00px;background:#bdbdbd"></div>
<div class="a" style="left:1065.00px;top:242.00px;width:213.00px;height:1.00px;background:#4a67a0"></div>
<div class="a" style="left:1066.00px;top:243.00px;width:211.00px;height:1.00px;background:#b8b8b8"></div>
<div class="a" style="left:1066.00px;top:526.00px;width:209.00px;height:1.00px;background:#b5c6e6"></div>
<div class="a" style="left:1065.00px;top:527.00px;width:213.00px;height:1.00px;background:#4a67a0"></div>
<div class="a" style="left:1065.00px;top:528.00px;width:213.00px;height:1.00px;background:#a8a8a8"></div>
<div class="a" style="left:1275.00px;top:243.00px;width:2.00px;height:284.00px;background:#a9c1e7"></div>
<div class="a" style="left:1277.00px;top:242.00px;width:1.00px;height:287.00px;background:#8a8a8a"></div>
<span class="t" style="left:1074.50px;top:250.15px;font-size:14px;line-height:14px;font-weight:700;color:#000;transform:scaleX(0.9678);">Khu vực</span>
<div class="a" style="left:1074.00px;top:270.50px;width:193.00px;height:1.50px;background:#4472c4"></div>
<svg class="a" style="left:1210px;top:246px;" width="20" height="20" viewBox="0 0 20 20"><path d="M2.6 4.7 L4.6 6.8 L8 2.3" stroke="#6b6b6b" stroke-width="1.3" fill="none"/><path d="M9.2 4.1 H17.9" stroke="#8a8a8a" stroke-width="1.4"/><path d="M2.6 9.9 L4.6 12.0 L8 7.5" stroke="#6b6b6b" stroke-width="1.3" fill="none"/><path d="M9.2 9.3 H17.9" stroke="#8a8a8a" stroke-width="1.4"/><path d="M2.6 15.1 L4.6 17.2 L8 12.7" stroke="#6b6b6b" stroke-width="1.3" fill="none"/><path d="M9.2 14.5 H17.9" stroke="#8a8a8a" stroke-width="1.4"/></svg>
<svg class="a" style="left:1245px;top:246px;" width="20" height="20" viewBox="0 0 20 20"><path d="M1.2 2 H14 L8.7 7.3 V13.4 H5.9 V7.3 Z" fill="#6b6b6b"/><path d="M3.3 3.1 L6.9 6.9 V12.6" stroke="#e0e0e0" stroke-width="0.7" fill="none"/><path d="M9.6 11.4 L17.2 18.2 M17 11.4 L9.8 18.2" stroke="#d9512c" stroke-width="2"/></svg>
<div class="a" style="left:1074.50px;top:276.80px;width:192.10px;height:26.20px;background:#b4c6e7;border:1px solid #7f93b5;border-radius:3px;outline:1px dotted #333;outline-offset:-3px"></div>
<span class="t" style="left:1084.50px;top:283.65px;font-size:14px;line-height:14px;font-weight:400;color:#000;transform:scaleX(0.9534);">Bắc</span>
<div class="a" style="left:1074.50px;top:307.40px;width:192.10px;height:26.60px;background:#ffffff;border:1px solid #d9d9d9;border-radius:3px"></div>
<span class="t" style="left:1084.50px;top:314.15px;font-size:14px;line-height:14px;font-weight:400;color:#000;transform:scaleX(1.0148);">Nam</span>
<svg class="a" style="left:1059px;top:378.3px;" width="14" height="14" viewBox="0 0 14 14"><circle cx="7" cy="7" r="5.2" fill="#fff" stroke="#595959" stroke-width="1.6"/></svg>
<svg class="a" style="left:1270.5px;top:378.3px;" width="14" height="14" viewBox="0 0 14 14"><circle cx="7" cy="7" r="5.2" fill="#fff" stroke="#595959" stroke-width="1.6"/></svg>
<svg class="a" style="left:1059px;top:520.5px;" width="14" height="14" viewBox="0 0 14 14"><circle cx="7" cy="7" r="5.2" fill="#fff" stroke="#595959" stroke-width="1.6"/></svg>
<svg class="a" style="left:1165px;top:520.5px;" width="14" height="14" viewBox="0 0 14 14"><circle cx="7" cy="7" r="5.2" fill="#fff" stroke="#595959" stroke-width="1.6"/></svg>
<svg class="a" style="left:1270.5px;top:520.5px;" width="14" height="14" viewBox="0 0 14 14"><circle cx="7" cy="7" r="5.2" fill="#fff" stroke="#595959" stroke-width="1.6"/></svg>
<svg class="a" style="left:1059px;top:241.5px;overflow:hidden" width="14" height="9" viewBox="0 0 14 9"><circle cx="7" cy="1.5" r="5.2" fill="#fff" stroke="#595959" stroke-width="1.6"/></svg>
<svg class="a" style="left:1165px;top:241.5px;overflow:hidden" width="14" height="9" viewBox="0 0 14 9"><circle cx="7" cy="1.5" r="5.2" fill="#fff" stroke="#595959" stroke-width="1.6"/></svg>
<svg class="a" style="left:1270.5px;top:241.5px;overflow:hidden" width="14" height="9" viewBox="0 0 14 9"><circle cx="7" cy="1.5" r="5.2" fill="#fff" stroke="#595959" stroke-width="1.6"/></svg>
<span class="t" style="left:9.20px;top:81.27px;font-size:13.5px;line-height:13.5px;font-weight:400;color:#262626;transform:scaleX(0.9488);">Slicer Caption:</span>
<div class="a" style="left:9.20px;top:100.50px;width:115.80px;height:23.20px;background:#fff;border:1px solid #c3c3c3"></div>
<span class="t" style="left:12.00px;top:105.57px;font-size:13.5px;line-height:13.5px;font-weight:400;color:#1f1f1f;transform:scaleX(0.9143);">Khu vực</span>
<svg class="a" style="left:14px;top:129.5px;" width="15" height="17" viewBox="0 0 15 17"><rect x="0.5" y="0.5" width="13" height="15.5" fill="#fff" stroke="#7a7a7a"/><rect x="0.5" y="0.5" width="13" height="2.5" fill="#2b6cb5"/><path d="M3 6.5 H4.5 M6 6.5 H11.5 M3 9.5 H4.5 M6 9.5 H11.5 M3 12.5 H4.5 M6 12.5 H11.5" stroke="#666" stroke-width="1"/></svg>
<span class="t" style="left:33.30px;top:132.07px;font-size:13.5px;line-height:13.5px;font-weight:400;color:#262626;transform:scaleX(0.9502);">Slicer Settings</span>
<div class="a" style="left:129.00px;top:81.70px;width:1.00px;height:60.80px;background:#d6d6d6"></div>
<svg class="a" style="left:154px;top:78px;" width="36" height="34" viewBox="0 0 36 34"><rect x="2" y="1" width="18" height="2.5" fill="#777"/><rect x="2.5" y="3.5" width="17" height="13" fill="#fff" stroke="#999" stroke-width="1"/><path d="M5 7 H12 M5 10 H14 M5 13 H11" stroke="#4a7fc1" stroke-width="1.4"/><path d="M10 8 L18 8 L14.5 12 Z" fill="#777"/><rect x="13.5" y="14" width="19" height="18" fill="#fff" stroke="#999" stroke-width="1"/><path d="M17 17 H30" stroke="#999" stroke-width="1.4"/><path d="M20 27 Q24 20 29 21" stroke="#2f72c2" stroke-width="1.8" fill="none"/><path d="M27 18.5 L30 21.5 L26.5 23" fill="#2f72c2"/><path d="M21 25 L18 28 L22.5 29" fill="#2f72c2"/><path d="M2 22 Q8 27 14 25" stroke="#6aa88a" stroke-width="3" fill="none"/><path d="M12 21 L17 25 L12 29 Z" fill="#6aa88a"/></svg>
<span class="t" style="left:153.00px;top:118.37px;font-size:13.5px;line-height:13.5px;font-weight:400;color:#262626;transform:scaleX(0.9746);">Report</span>
<span class="t" style="left:137.00px;top:135.87px;font-size:13.5px;line-height:13.5px;font-weight:400;color:#262626;transform:scaleX(0.9499);">Connections</span>
<span class="t" style="left:94.70px;top:158.34px;font-size:12px;line-height:12px;font-weight:400;color:#444;transform:scaleX(0.8995);">Slicer</span>
<div class="a" style="left:219.50px;top:76.00px;width:1.00px;height:91.50px;background:#c8c8c8"></div>
<div class="a" style="left:229.60px;top:77.80px;width:433.90px;height:65.60px;background:#ffffff;border:1px solid #d4d4d4"></div>
<div class="a" style="left:663.00px;top:77.80px;width:26.40px;height:65.60px;background:#f3f3f3;border:1px solid #c3c3c3"></div>
<svg class="a" style="left:671px;top:104px;" width="10" height="10" viewBox="0 0 10 10"><path d="M1 1 H9" stroke="#444" stroke-width="1.2"/><path d="M1.5 4 L5 7.5 L8.5 4" stroke="#444" stroke-width="1.2" fill="none"/></svg>
<div class="a" style="left:231.20px;top:81.40px;width:53.60px;height:57.60px;background:#c8c8c8;border:1px solid #a8a8a8"></div>
<svg class="a" style="left:236px;top:86px;" width="45" height="49" viewBox="0 0 45 49"><rect x="0.5" y="0.5" width="43.8" height="48.1" fill="#fff" stroke="#4472c4" stroke-width="1"/><path d="M0.5 9.5 H44.3" stroke="#4472c4" stroke-width="1"/><rect x="2.5" y="11.5" width="39.8" height="8.0" fill="#b4c6e7" stroke="#7a7a7a" stroke-width="1"/><rect x="3" y="14.6" width="9" height="1.8" fill="#595959"/><rect x="16" y="14.6" width="9" height="1.8" fill="#595959"/><rect x="29.5" y="14.6" width="9" height="1.8" fill="#595959"/><rect x="2.5" y="21.5" width="39.8" height="8.0" fill="#ffffff" stroke="#e0e0e0" stroke-width="1"/><rect x="3" y="24.9" width="9" height="1.3" fill="#444"/><rect x="16" y="24.9" width="9" height="1.3" fill="#444"/><rect x="29.5" y="24.9" width="9" height="1.3" fill="#444"/><rect x="2.5" y="31.5" width="39.8" height="7.0" fill="#dae3f3" stroke="#e6e6e6" stroke-width="1"/><rect x="3" y="34.5" width="9" height="1.0" fill="#8f8f8f"/><rect x="16" y="34.5" width="9" height="1.0" fill="#8f8f8f"/><rect x="29.5" y="34.5" width="9" height="1.0" fill="#8f8f8f"/><rect x="2.5" y="40.5" width="39.8" height="7.0" fill="#ffffff" stroke="#e6e6e6" stroke-width="1"/><rect x="3" y="43.5" width="9" height="1.0" fill="#b5b5b5"/><rect x="16" y="43.5" width="9" height="1.0" fill="#b5b5b5"/><rect x="29.5" y="43.5" width="9" height="1.0" fill="#b5b5b5"/><rect x="3" y="4.4" width="9" height="1.4" fill="#111"/><rect x="16" y="4.4" width="9" height="1.4" fill="#111"/><rect x="29.5" y="4.4" width="9" height="1.4" fill="#111"/></svg>
<svg class="a" style="left:290px;top:86px;" width="45" height="49" viewBox="0 0 45 49"><rect x="0.5" y="0.5" width="43.8" height="48.1" fill="#fff" stroke="#ed7d31" stroke-width="1"/><path d="M0.5 9.5 H44.3" stroke="#ed7d31" stroke-width="1"/><rect x="2.5" y="11.5" width="39.8" height="8.0" fill="#f8cbad" stroke="#7a7a7a" stroke-width="1"/><rect x="3" y="14.6" width="9" height="1.8" fill="#6b5040"/><rect x="16" y="14.6" width="9" height="1.8" fill="#6b5040"/><rect x="29.5" y="14.6" width="9" height="1.8" fill="#6b5040"/><rect x="2.5" y="21.5" width="39.8" height="8.0" fill="#ffffff" stroke="#e0e0e0" stroke-width="1"/><rect x="3" y="24.9" width="9" height="1.3" fill="#444"/><rect x="16" y="24.9" width="9" height="1.3" fill="#444"/><rect x="29.5" y="24.9" width="9" height="1.3" fill="#444"/><rect x="2.5" y="31.5" width="39.8" height="7.0" fill="#fce4d6" stroke="#e6e6e6" stroke-width="1"/><rect x="3" y="34.5" width="9" height="1.0" fill="#8f8f8f"/><rect x="16" y="34.5" width="9" height="1.0" fill="#8f8f8f"/><rect x="29.5" y="34.5" width="9" height="1.0" fill="#8f8f8f"/><rect x="2.5" y="40.5" width="39.8" height="7.0" fill="#ffffff" stroke="#e6e6e6" stroke-width="1"/><rect x="3" y="43.5" width="9" height="1.0" fill="#b5b5b5"/><rect x="16" y="43.5" width="9" height="1.0" fill="#b5b5b5"/><rect x="29.5" y="43.5" width="9" height="1.0" fill="#b5b5b5"/><rect x="3" y="4.4" width="9" height="1.4" fill="#111"/><rect x="16" y="4.4" width="9" height="1.4" fill="#111"/><rect x="29.5" y="4.4" width="9" height="1.4" fill="#111"/></svg>
<svg class="a" style="left:344px;top:86px;" width="45" height="49" viewBox="0 0 45 49"><rect x="0.5" y="0.5" width="43.8" height="48.1" fill="#fff" stroke="#c4c4c4" stroke-width="1"/><path d="M0.5 9.5 H44.3" stroke="#c4c4c4" stroke-width="1"/><rect x="2.5" y="11.5" width="39.8" height="8.0" fill="#d9d9d9" stroke="#7a7a7a" stroke-width="1"/><rect x="3" y="14.6" width="9" height="1.8" fill="#595959"/><rect x="16" y="14.6" width="9" height="1.8" fill="#595959"/><rect x="29.5" y="14.6" width="9" height="1.8" fill="#595959"/><rect x="2.5" y="21.5" width="39.8" height="8.0" fill="#ffffff" stroke="#e0e0e0" stroke-width="1"/><rect x="3" y="24.9" width="9" height="1.3" fill="#444"/><rect x="16" y="24.9" width="9" height="1.3" fill="#444"/><rect x="29.5" y="24.9" width="9" height="1.3" fill="#444"/><rect x="2.5" y="31.5" width="39.8" height="7.0" fill="#ededed" stroke="#e6e6e6" stroke-width="1"/><rect x="3" y="34.5" width="9" height="1.0" fill="#8f8f8f"/><rect x="16" y="34.5" width="9" height="1.0" fill="#8f8f8f"/><rect x="29.5" y="34.5" width="9" height="1.0" fill="#8f8f8f"/><rect x="2.5" y="40.5" width="39.8" height="7.0" fill="#ffffff" stroke="#e6e6e6" stroke-width="1"/><rect x="3" y="43.5" width="9" height="1.0" fill="#b5b5b5"/><rect x="16" y="43.5" width="9" height="1.0" fill="#b5b5b5"/><rect x="29.5" y="43.5" width="9" height="1.0" fill="#b5b5b5"/><rect x="3" y="4.4" width="9" height="1.4" fill="#111"/><rect x="16" y="4.4" width="9" height="1.4" fill="#111"/><rect x="29.5" y="4.4" width="9" height="1.4" fill="#111"/></svg>
<svg class="a" style="left:398px;top:86px;" width="45" height="49" viewBox="0 0 45 49"><rect x="0.5" y="0.5" width="43.8" height="48.1" fill="#fff" stroke="#ffc000" stroke-width="1"/><path d="M0.5 9.5 H44.3" stroke="#ffc000" stroke-width="1"/><rect x="2.5" y="11.5" width="39.8" height="8.0" fill="#ffe699" stroke="#7a7a7a" stroke-width="1"/><rect x="3" y="14.6" width="9" height="1.8" fill="#6b5a20"/><rect x="16" y="14.6" width="9" height="1.8" fill="#6b5a20"/><rect x="29.5" y="14.6" width="9" height="1.8" fill="#6b5a20"/><rect x="2.5" y="21.5" width="39.8" height="8.0" fill="#ffffff" stroke="#e0e0e0" stroke-width="1"/><rect x="3" y="24.9" width="9" height="1.3" fill="#444"/><rect x="16" y="24.9" width="9" height="1.3" fill="#444"/><rect x="29.5" y="24.9" width="9" height="1.3" fill="#444"/><rect x="2.5" y="31.5" width="39.8" height="7.0" fill="#fff2cc" stroke="#e6e6e6" stroke-width="1"/><rect x="3" y="34.5" width="9" height="1.0" fill="#8f8f8f"/><rect x="16" y="34.5" width="9" height="1.0" fill="#8f8f8f"/><rect x="29.5" y="34.5" width="9" height="1.0" fill="#8f8f8f"/><rect x="2.5" y="40.5" width="39.8" height="7.0" fill="#ffffff" stroke="#e6e6e6" stroke-width="1"/><rect x="3" y="43.5" width="9" height="1.0" fill="#b5b5b5"/><rect x="16" y="43.5" width="9" height="1.0" fill="#b5b5b5"/><rect x="29.5" y="43.5" width="9" height="1.0" fill="#b5b5b5"/><rect x="3" y="4.4" width="9" height="1.4" fill="#111"/><rect x="16" y="4.4" width="9" height="1.4" fill="#111"/><rect x="29.5" y="4.4" width="9" height="1.4" fill="#111"/></svg>
<svg class="a" style="left:452px;top:86px;" width="45" height="49" viewBox="0 0 45 49"><rect x="0.5" y="0.5" width="43.8" height="48.1" fill="#fff" stroke="#5b9bd5" stroke-width="1"/><path d="M0.5 9.5 H44.3" stroke="#5b9bd5" stroke-width="1"/><rect x="2.5" y="11.5" width="39.8" height="8.0" fill="#bdd7ee" stroke="#7a7a7a" stroke-width="1"/><rect x="3" y="14.6" width="9" height="1.8" fill="#595959"/><rect x="16" y="14.6" width="9" height="1.8" fill="#595959"/><rect x="29.5" y="14.6" width="9" height="1.8" fill="#595959"/><rect x="2.5" y="21.5" width="39.8" height="8.0" fill="#ffffff" stroke="#e0e0e0" stroke-width="1"/><rect x="3" y="24.9" width="9" height="1.3" fill="#444"/><rect x="16" y="24.9" width="9" height="1.3" fill="#444"/><rect x="29.5" y="24.9" width="9" height="1.3" fill="#444"/><rect x="2.5" y="31.5" width="39.8" height="7.0" fill="#deebf7" stroke="#e6e6e6" stroke-width="1"/><rect x="3" y="34.5" width="9" height="1.0" fill="#8f8f8f"/><rect x="16" y="34.5" width="9" height="1.0" fill="#8f8f8f"/><rect x="29.5" y="34.5" width="9" height="1.0" fill="#8f8f8f"/><rect x="2.5" y="40.5" width="39.8" height="7.0" fill="#ffffff" stroke="#e6e6e6" stroke-width="1"/><rect x="3" y="43.5" width="9" height="1.0" fill="#b5b5b5"/><rect x="16" y="43.5" width="9" height="1.0" fill="#b5b5b5"/><rect x="29.5" y="43.5" width="9" height="1.0" fill="#b5b5b5"/><rect x="3" y="4.4" width="9" height="1.4" fill="#111"/><rect x="16" y="4.4" width="9" height="1.4" fill="#111"/><rect x="29.5" y="4.4" width="9" height="1.4" fill="#111"/></svg>
<svg class="a" style="left:506px;top:86px;" width="45" height="49" viewBox="0 0 45 49"><rect x="0.5" y="0.5" width="43.8" height="48.1" fill="#fff" stroke="#70ad47" stroke-width="1"/><path d="M0.5 9.5 H44.3" stroke="#70ad47" stroke-width="1"/><rect x="2.5" y="11.5" width="39.8" height="8.0" fill="#c6e0b4" stroke="#7a7a7a" stroke-width="1"/><rect x="3" y="14.6" width="9" height="1.8" fill="#595959"/><rect x="16" y="14.6" width="9" height="1.8" fill="#595959"/><rect x="29.5" y="14.6" width="9" height="1.8" fill="#595959"/><rect x="2.5" y="21.5" width="39.8" height="8.0" fill="#ffffff" stroke="#e0e0e0" stroke-width="1"/><rect x="3" y="24.9" width="9" height="1.3" fill="#444"/><rect x="16" y="24.9" width="9" height="1.3" fill="#444"/><rect x="29.5" y="24.9" width="9" height="1.3" fill="#444"/><rect x="2.5" y="31.5" width="39.8" height="7.0" fill="#e2efda" stroke="#e6e6e6" stroke-width="1"/><rect x="3" y="34.5" width="9" height="1.0" fill="#8f8f8f"/><rect x="16" y="34.5" width="9" height="1.0" fill="#8f8f8f"/><rect x="29.5" y="34.5" width="9" height="1.0" fill="#8f8f8f"/><rect x="2.5" y="40.5" width="39.8" height="7.0" fill="#ffffff" stroke="#e6e6e6" stroke-width="1"/><rect x="3" y="43.5" width="9" height="1.0" fill="#b5b5b5"/><rect x="16" y="43.5" width="9" height="1.0" fill="#b5b5b5"/><rect x="29.5" y="43.5" width="9" height="1.0" fill="#b5b5b5"/><rect x="3" y="4.4" width="9" height="1.4" fill="#111"/><rect x="16" y="4.4" width="9" height="1.4" fill="#111"/><rect x="29.5" y="4.4" width="9" height="1.4" fill="#111"/></svg>
<svg class="a" style="left:559px;top:86px;" width="45" height="49" viewBox="0 0 45 49"><rect x="0.5" y="0.5" width="43.8" height="48.1" fill="#fff" stroke="#7f7f7f" stroke-width="1"/><path d="M0.5 9.5 H44.3" stroke="#7f7f7f" stroke-width="1"/><rect x="2.5" y="11.5" width="39.8" height="8.0" fill="#a6a6a6" stroke="#7a7a7a" stroke-width="1"/><rect x="3" y="14.6" width="9" height="1.8" fill="#404040"/><rect x="16" y="14.6" width="9" height="1.8" fill="#404040"/><rect x="29.5" y="14.6" width="9" height="1.8" fill="#404040"/><rect x="2.5" y="21.5" width="39.8" height="8.0" fill="#ffffff" stroke="#e0e0e0" stroke-width="1"/><rect x="3" y="24.9" width="9" height="1.3" fill="#444"/><rect x="16" y="24.9" width="9" height="1.3" fill="#444"/><rect x="29.5" y="24.9" width="9" height="1.3" fill="#444"/><rect x="2.5" y="31.5" width="39.8" height="7.0" fill="#d9d9d9" stroke="#d0d0d0" stroke-width="1"/><rect x="3" y="34.2" width="9" height="1.5" fill="#000"/><rect x="16" y="34.2" width="9" height="1.5" fill="#000"/><rect x="29.5" y="34.2" width="9" height="1.5" fill="#000"/><rect x="2.5" y="40.5" width="39.8" height="7.0" fill="#ffffff" stroke="#e6e6e6" stroke-width="1"/><rect x="3" y="43.5" width="9" height="1.0" fill="#b5b5b5"/><rect x="16" y="43.5" width="9" height="1.0" fill="#b5b5b5"/><rect x="29.5" y="43.5" width="9" height="1.0" fill="#b5b5b5"/><rect x="3" y="4.4" width="9" height="1.4" fill="#111"/><rect x="16" y="4.4" width="9" height="1.4" fill="#111"/><rect x="29.5" y="4.4" width="9" height="1.4" fill="#111"/></svg>
<svg class="a" style="left:613px;top:86px;" width="45" height="49" viewBox="0 0 45 49"><rect x="0.5" y="0.5" width="43.8" height="48.1" fill="#fff" stroke="#4472c4" stroke-width="1"/><path d="M0.5 9.5 H44.3" stroke="#4472c4" stroke-width="1"/><rect x="2.5" y="11.5" width="39.8" height="8.0" fill="#b4c6e7" stroke="#7a7a7a" stroke-width="1"/><rect x="3" y="14.6" width="9" height="1.8" fill="#595959"/><rect x="16" y="14.6" width="9" height="1.8" fill="#595959"/><rect x="29.5" y="14.6" width="9" height="1.8" fill="#595959"/><rect x="2.5" y="21.5" width="39.8" height="8.0" fill="#ffffff" stroke="#e0e0e0" stroke-width="1"/><rect x="3" y="24.9" width="9" height="1.3" fill="#444"/><rect x="16" y="24.9" width="9" height="1.3" fill="#444"/><rect x="29.5" y="24.9" width="9" height="1.3" fill="#444"/><rect x="2.5" y="31.5" width="39.8" height="7.0" fill="#ededed" stroke="#e0e0e0" stroke-width="1"/><rect x="3" y="34.5" width="9" height="1.0" fill="#8f8f8f"/><rect x="16" y="34.5" width="9" height="1.0" fill="#8f8f8f"/><rect x="29.5" y="34.5" width="9" height="1.0" fill="#8f8f8f"/><rect x="2.5" y="40.5" width="39.8" height="7.0" fill="#ffffff" stroke="#e6e6e6" stroke-width="1"/><rect x="3" y="43.5" width="9" height="1.0" fill="#b5b5b5"/><rect x="16" y="43.5" width="9" height="1.0" fill="#b5b5b5"/><rect x="29.5" y="43.5" width="9" height="1.0" fill="#b5b5b5"/><rect x="3" y="4.4" width="9" height="1.4" fill="#111"/><rect x="16" y="4.4" width="9" height="1.4" fill="#111"/><rect x="29.5" y="4.4" width="9" height="1.4" fill="#111"/></svg>
<span class="t" style="left:429.60px;top:158.34px;font-size:12px;line-height:12px;font-weight:400;color:#444;transform:scaleX(0.8965);">Slicer Styles</span>
<div class="a" style="left:701.00px;top:76.00px;width:1.00px;height:91.40px;background:#c8c8c8"></div>
<svg class="a" style="left:727px;top:78px;" width="34" height="34" viewBox="0 0 34 34"><rect x="13.5" y="15.5" width="17" height="16.5" fill="#fff" stroke="#8a8a8a" stroke-width="1"/><rect x="2" y="1.8" width="22.7" height="23.4" fill="#ecc67a"/></svg>
<span class="t" style="left:727.70px;top:117.87px;font-size:13.5px;line-height:13.5px;font-weight:400;color:#262626;transform:scaleX(0.9551);">Bring</span>
<span class="t" style="left:713.40px;top:135.67px;font-size:13.5px;line-height:13.5px;font-weight:400;color:#262626;transform:scaleX(0.9896);">Forward</span>
<svg class="a" style="left:764.5px;top:139px;" width="8" height="6" viewBox="0 0 8 6"><path d="M0.8 0.8 L3.8 3.8 L6.8 0.8" stroke="#444" stroke-width="1.1" fill="none"/></svg>
<svg class="a" style="left:797px;top:78px;" width="34" height="34" viewBox="0 0 34 34"><rect x="2" y="1.8" width="23" height="23.4" fill="#ecc67a"/><rect x="13.5" y="15.5" width="16.5" height="16.5" fill="#fff" stroke="#8a8a8a" stroke-width="1"/></svg>
<span class="t" style="left:798.50px;top:117.87px;font-size:13.5px;line-height:13.5px;font-weight:400;color:#262626;transform:scaleX(0.8880);">Send</span>
<span class="t" style="left:778.80px;top:135.67px;font-size:13.5px;line-height:13.5px;font-weight:400;color:#262626;transform:scaleX(0.9784);">Backward</span>
<svg class="a" style="left:839.5px;top:139px;" width="8" height="6" viewBox="0 0 8 6"><path d="M0.8 0.8 L3.8 3.8 L6.8 0.8" stroke="#444" stroke-width="1.1" fill="none"/></svg>
<svg class="a" style="left:863px;top:78px;" width="34" height="34" viewBox="0 0 34 34"><rect x="2.5" y="1.5" width="13.5" height="13" fill="#fff" stroke="#8a8a8a"/><rect x="12" y="10" width="13" height="13" fill="#ecc67a"/><rect x="2.5" y="17.5" width="13.5" height="13.5" fill="#fff" stroke="#8a8a8a"/><path d="M21 17 L21 31.5 L24.3 28.3 L26.8 33 L28.6 32 L26.2 27.4 L30.5 27.4 Z" fill="#fff" stroke="#666" stroke-width="1"/></svg>
<span class="t" style="left:852.80px;top:117.87px;font-size:13.5px;line-height:13.5px;font-weight:400;color:#262626;transform:scaleX(0.9686);">Selection</span>
<span class="t" style="left:866.40px;top:135.67px;font-size:13.5px;line-height:13.5px;font-weight:400;color:#262626;transform:scaleX(0.8436);">Pane</span>
<svg class="a" style="left:914px;top:78px;" width="36" height="34" viewBox="0 0 36 34"><rect x="2.2" y="1" width="1.8" height="32" fill="#6b6b6b"/><rect x="6.5" y="5.5" width="15.5" height="8.5" fill="#fff" stroke="#7a7a7a"/><rect x="18" y="17.3" width="16" height="15.7" fill="#ecc67a"/><path d="M9 25.4 H17.6" stroke="#4a7fc1" stroke-width="2.6"/><path d="M6.2 25.4 L11.4 20.6 L11.4 30.2 Z" fill="#4a7fc1"/></svg>
<span class="t" style="left:916.40px;top:117.87px;font-size:13.5px;line-height:13.5px;font-weight:400;color:#262626;transform:scaleX(1.0289);">Align</span>
<svg class="a" style="left:928px;top:138px;" width="8" height="6" viewBox="0 0 8 6"><path d="M0.8 0.8 L3.8 3.8 L6.8 0.8" stroke="#444" stroke-width="1.1" fill="none"/></svg>
<svg class="a" style="left:961px;top:78px;" width="36" height="34" viewBox="0 0 36 34"><rect x="2.8" y="2.8" width="19.8" height="20.5" fill="#f6f1f6" stroke="#c0c0c0"/><rect x="11.5" y="11.5" width="20" height="20" fill="#f6f1f6" fill-opacity=".7" stroke="#c0c0c0"/><rect x="1" y="1" width="3.8" height="3.8" fill="#b5b5b5"/><rect x="29" y="1" width="3.8" height="3.8" fill="#b5b5b5"/><rect x="1" y="29" width="3.8" height="3.8" fill="#b5b5b5"/><rect x="29" y="29" width="3.8" height="3.8" fill="#b5b5b5"/></svg>
<span class="t" style="left:959.60px;top:117.87px;font-size:13.5px;line-height:13.5px;font-weight:400;color:#a6a6a6;transform:scaleX(0.9539);">Group</span>
<svg class="a" style="left:974px;top:138px;" width="8" height="6" viewBox="0 0 8 6"><path d="M0.8 0.8 L3.8 3.8 L6.8 0.8" stroke="#bdbdbd" stroke-width="1.1" fill="none"/></svg>
<svg class="a" style="left:1006px;top:82px;" width="36" height="26" viewBox="0 0 36 26"><path d="M2.3 22.4 L20.7 12 L20.7 22.4 Z" fill="#f2eff4" stroke="#cfcfcf" stroke-width="1"/><path d="M22.6 2.8 L22.6 22.4 L34.2 22.4 Z" fill="#b3b3b3"/><path d="M8.5 9.8 Q9.5 4.8 15.5 4.8" stroke="#b0b0b0" stroke-width="1.6" fill="none"/><path d="M14.3 1.6 L18.3 4.8 L14.3 8 Z" fill="#b0b0b0"/></svg>
<span class="t" style="left:1005.00px;top:117.87px;font-size:13.5px;line-height:13.5px;font-weight:400;color:#a6a6a6;transform:scaleX(0.9603);">Rotate</span>
<svg class="a" style="left:1019.5px;top:138px;" width="8" height="6" viewBox="0 0 8 6"><path d="M0.8 0.8 L3.8 3.8 L6.8 0.8" stroke="#bdbdbd" stroke-width="1.1" fill="none"/></svg>
<span class="t" style="left:856.50px;top:158.34px;font-size:12px;line-height:12px;font-weight:400;color:#444;transform:scaleX(0.9531);">Arrange</span>
<div class="a" style="left:1055.00px;top:76.00px;width:1.00px;height:91.40px;background:#c8c8c8"></div>
<svg class="a" style="left:1067.5px;top:80px;" width="18" height="13" viewBox="0 0 18 13"><rect x="3.5" y="1.5" width="11" height="10" fill="#fff" stroke="#7a7a7a"/><path d="M3.5 4.5 H14.5 M3.5 7.5 H14.5 M7.5 4.5 V11.5 M11 4.5 V11.5" stroke="#9a9a9a" stroke-width=".8"/><path d="M0.5 6.5 L2 5 L2 8Z M17.5 6.5 L16 5 L16 8Z" fill="#3a78c3"/></svg>
<span class="t" style="left:1089.50px;top:80.17px;font-size:13.5px;line-height:13.5px;font-weight:400;color:#262626;transform:scaleX(0.9293);">Columns:</span>
<div class="a" style="left:1148.70px;top:74.40px;width:67.60px;height:25.10px;background:#fff;border:1px solid #bdbdbd"></div>
<span class="t" style="left:1151.70px;top:80.57px;font-size:13.5px;line-height:13.5px;font-weight:400;color:#1f1f1f;">1</span>
<svg class="a" style="left:1203.3px;top:78.4px;" width="9" height="18" viewBox="0 0 9 18"><path d="M2 4.2 L4.5 1.7 L7 4.2" stroke="#555" stroke-width="1.1" fill="none"/><path d="M2 13.8 L4.5 16.3 L7 13.8" stroke="#555" stroke-width="1.1" fill="none"/></svg>
<svg class="a" style="left:1068px;top:101.5px;" width="18" height="19" viewBox="0 0 18 19"><rect x="10.5" y="1.5" width="5" height="16" fill="#fff" stroke="#7a7a7a"/><path d="M4 2 V17" stroke="#3a78c3" stroke-width="1.2"/><path d="M1.5 4 L4 1 L6.5 4 M1.5 15 L4 18 L6.5 15" stroke="#3a78c3" stroke-width="1.2" fill="none"/><rect x="2" y="8" width="4" height="3.5" fill="#fff" stroke="#7a7a7a" stroke-width=".8"/></svg>
<span class="t" style="left:1089.50px;top:106.57px;font-size:13.5px;line-height:13.5px;font-weight:400;color:#262626;transform:scaleX(0.9794);">Height:</span>
<div class="a" style="left:1138.30px;top:100.30px;width:81.00px;height:24.70px;background:#fff;border:1px solid #bdbdbd"></div>
<span class="t" style="left:1141.30px;top:106.07px;font-size:13.5px;line-height:13.5px;font-weight:400;color:#1f1f1f;">0.26"</span>
<svg class="a" style="left:1206.3px;top:104.3px;" width="9" height="18" viewBox="0 0 9 18"><path d="M2 4.2 L4.5 1.7 L7 4.2" stroke="#555" stroke-width="1.1" fill="none"/><path d="M2 13.8 L4.5 16.3 L7 13.8" stroke="#555" stroke-width="1.1" fill="none"/></svg>
<svg class="a" style="left:1068px;top:129.5px;" width="19" height="17" viewBox="0 0 19 17"><rect x="1.5" y="1.5" width="16" height="5" fill="#fff" stroke="#7a7a7a"/><path d="M2 12.5 H17" stroke="#3a78c3" stroke-width="1.2"/><path d="M4 10 L1 12.5 L4 15 M15 10 L18 12.5 L15 15" stroke="#3a78c3" stroke-width="1.2" fill="none"/><rect x="7.5" y="10.5" width="4" height="4" fill="#fff" stroke="#7a7a7a" stroke-width=".8"/></svg>
<span class="t" style="left:1089.50px;top:131.97px;font-size:13.5px;line-height:13.5px;font-weight:400;color:#262626;">Width:</span>
<div class="a" style="left:1138.30px;top:125.40px;width:81.00px;height:25.20px;background:#fff;border:1px solid #bdbdbd"></div>
<span class="t" style="left:1141.30px;top:131.67px;font-size:13.5px;line-height:13.5px;font-weight:400;color:#1f1f1f;">1.81"</span>
<svg class="a" style="left:1206.3px;top:129.4px;" width="9" height="18" viewBox="0 0 9 18"><path d="M2 4.2 L4.5 1.7 L7 4.2" stroke="#555" stroke-width="1.1" fill="none"/><path d="M2 13.8 L4.5 16.3 L7 13.8" stroke="#555" stroke-width="1.1" fill="none"/></svg>
<span class="t" style="left:1121.50px;top:158.34px;font-size:12px;line-height:12px;font-weight:400;color:#444;transform:scaleX(0.9090);">Buttons</span>
<div class="a" style="left:1227.00px;top:76.00px;width:1.00px;height:91.40px;background:#c8c8c8"></div>
<svg class="a" style="left:1240px;top:85.5px;" width="18" height="19" viewBox="0 0 18 19"><rect x="10.5" y="1.5" width="5" height="16" fill="#fff" stroke="#7a7a7a"/><path d="M4 2 V17" stroke="#3a78c3" stroke-width="1.2"/><path d="M1.5 4 L4 1 L6.5 4 M1.5 15 L4 18 L6.5 15" stroke="#3a78c3" stroke-width="1.2" fill="none"/><rect x="2" y="8" width="4" height="3.5" fill="#fff" stroke="#7a7a7a" stroke-width=".8"/></svg>
<span class="t" style="left:1261.60px;top:89.37px;font-size:13.5px;line-height:13.5px;font-weight:400;color:#262626;transform:scaleX(0.9817);">Height:</span>
<div class="a" style="left:1310.20px;top:83.00px;width:80.80px;height:25.70px;background:#fff;border:1px solid #bdbdbd"></div>
<span class="t" style="left:1313.20px;top:89.77px;font-size:13.5px;line-height:13.5px;font-weight:400;color:#1f1f1f;">2.7"</span>
<svg class="a" style="left:1378px;top:87px;" width="9" height="18" viewBox="0 0 9 18"><path d="M2 4.2 L4.5 1.7 L7 4.2" stroke="#555" stroke-width="1.1" fill="none"/><path d="M2 13.8 L4.5 16.3 L7 13.8" stroke="#555" stroke-width="1.1" fill="none"/></svg>
<svg class="a" style="left:1240px;top:121px;" width="19" height="17" viewBox="0 0 19 17"><rect x="1.5" y="1.5" width="16" height="5" fill="#fff" stroke="#7a7a7a"/><path d="M2 12.5 H17" stroke="#3a78c3" stroke-width="1.2"/><path d="M4 10 L1 12.5 L4 15 M15 10 L18 12.5 L15 15" stroke="#3a78c3" stroke-width="1.2" fill="none"/><rect x="7.5" y="10.5" width="4" height="4" fill="#fff" stroke="#7a7a7a" stroke-width=".8"/></svg>
<span class="t" style="left:1261.60px;top:123.17px;font-size:13.5px;line-height:13.5px;font-weight:400;color:#262626;transform:scaleX(0.9931);">Width:</span>
<div class="a" style="left:1310.20px;top:117.30px;width:80.80px;height:25.40px;background:#fff;border:1px solid #bdbdbd"></div>
<span class="t" style="left:1313.20px;top:123.77px;font-size:13.5px;line-height:13.5px;font-weight:400;color:#1f1f1f;">2"</span>
<svg class="a" style="left:1378px;top:121.3px;" width="9" height="18" viewBox="0 0 9 18"><path d="M2 4.2 L4.5 1.7 L7 4.2" stroke="#555" stroke-width="1.1" fill="none"/><path d="M2 13.8 L4.5 16.3 L7 13.8" stroke="#555" stroke-width="1.1" fill="none"/></svg>
<span class="t" style="left:1293.70px;top:158.34px;font-size:12px;line-height:12px;font-weight:400;color:#444;transform:scaleX(0.8439);">Size</span>
<svg class="a" style="left:1386px;top:159px;" width="10" height="9" viewBox="0 0 10 9"><path d="M0.5 0.5 H5 M0.5 0.5 V5" stroke="#666" fill="none"/><path d="M2.5 2.5 L8.5 8.5 M8.5 4 V8.5 H4" stroke="#666" stroke-width="1.1" fill="none"/></svg>
<div class="a" style="left:1399.30px;top:76.00px;width:1.00px;height:91.40px;background:#c8c8c8"></div>
<svg class="a" style="left:24px;top:10px;" width="14" height="15" viewBox="0 0 14 15"><path d="M1 1 H13 V14 H1 Z" fill="none" stroke="#f4f4f4" stroke-width="2"/><rect x="0" y="8.4" width="14" height="6.6" fill="#f4f4f4"/><rect x="3.2" y="10.5" width="6.8" height="3.2" fill="#217346"/><rect x="5.1" y="10.5" width="1.9" height="3.2" fill="#f4f4f4"/></svg>
<svg class="a" style="left:50px;top:8px;" width="24" height="20" viewBox="0 0 24 20"><path d="M9.5 3.8 L5.6 7.4 L9.5 11" stroke="#f4f4f4" stroke-width="2.6" fill="none"/><path d="M6.5 7.4 H13.3 A4.6 4.6 0 0 1 13.3 16.6 H12.8" stroke="#f4f4f4" stroke-width="2.6" fill="none"/></svg>
<svg class="a" style="left:77px;top:15px;" width="8" height="5" viewBox="0 0 8 5"><path d="M0.8 0.8 L3.5 3.5 L6.2 0.8" stroke="#f4f4f4" stroke-width="1.2" fill="none"/></svg>
<svg class="a" style="left:94px;top:8px;" width="20" height="20" viewBox="0 0 20 20"><path d="M12.3 3.8 L16.2 7.4 L12.3 11" stroke="#5a9f77" stroke-width="2.6" fill="none"/><path d="M15.3 7.4 H8.5 A4.6 4.6 0 0 0 8.5 16.6 H9" stroke="#5a9f77" stroke-width="2.6" fill="none"/></svg>
<svg class="a" style="left:120px;top:15px;" width="7" height="5" viewBox="0 0 7 5"><path d="M0.6 0.6 L3.3 3.3 L6 0.6" stroke="#5a9f77" stroke-width="1.1" fill="none"/></svg>
<svg class="a" style="left:137px;top:9px;" width="19" height="19" viewBox="0 0 19 19"><path d="M9 15.8 H2 V1.5 H11 L14.2 4.7 V7.5" stroke="#f4f4f4" stroke-width="1.4" fill="none"/><path d="M11 1.5 V4.7 H14.2" stroke="#f4f4f4" stroke-width="1" fill="none"/><circle cx="11.6" cy="10.9" r="3.6" stroke="#f4f4f4" stroke-width="1.6" fill="none"/><path d="M14.2 13.5 L17.3 16.8" stroke="#f4f4f4" stroke-width="1.8"/></svg>
<svg class="a" style="left:174px;top:16px;" width="6" height="7" viewBox="0 0 6 7"><rect x="0.8" y="0.8" width="4.4" height="1.2" fill="#f4f4f4"/><path d="M0.6 3 L5.4 3 L3 5.8 Z" fill="#f4f4f4"/></svg>
<svg class="a" style="left:757px;top:45px;" width="16" height="20" viewBox="0 0 16 20"><path d="M8 1.2 A6.2 6.2 0 0 0 4.3 12.4 L4.8 14.5 H11.2 L11.7 12.4 A6.2 6.2 0 0 0 8 1.2 Z" fill="none" stroke="#f2f2f2" stroke-width="1.3"/><path d="M5.2 16.3 H10.8 M5.8 18.3 H10.2" stroke="#f2f2f2" stroke-width="1.3"/></svg>
<div class="a" style="left:1095.00px;top:9.00px;width:1.00px;height:1.00px;background:#9a9a9a"></div>
<div class="a" style="left:1095.00px;top:12.00px;width:1.00px;height:1.00px;background:#9a9a9a"></div>
<div class="a" style="left:1095.00px;top:15.00px;width:1.00px;height:1.00px;background:#9a9a9a"></div>
<div class="a" style="left:1095.00px;top:18.00px;width:1.00px;height:1.00px;background:#9a9a9a"></div>
<div class="a" style="left:1095.00px;top:21.00px;width:1.00px;height:1.00px;background:#9a9a9a"></div>
<div class="a" style="left:1095.00px;top:24.00px;width:1.00px;height:1.00px;background:#9a9a9a"></div>
<div class="a" style="left:1095.00px;top:27.00px;width:1.00px;height:1.00px;background:#9a9a9a"></div>
<svg class="a" style="left:1315px;top:10px;" width="20" height="18" viewBox="0 0 20 18"><rect x="1" y="7" width="17" height="9" rx="1.5" fill="#bdbdbd" stroke="#8a8a8a" stroke-width=".8"/><path d="M3 10 H16 M3 12.5 H16" stroke="#eee" stroke-width="1"/><path d="M9 7 Q10 2 17 3" stroke="#8a8a8a" stroke-width="1.2" fill="none"/></svg>
<svg class="a" style="left:1463px;top:9px;" width="10" height="19" viewBox="0 0 10 19"><rect x="1.5" y="1.5" width="7" height="4" rx="1.5" fill="none" stroke="#333" stroke-width="1"/><path d="M1.5 12 V16.5 H8.5 V12" stroke="#333" stroke-width="1.2" fill="none"/></svg>
<svg class="a" style="left:24px;top:857px;" width="8" height="10" viewBox="0 0 8 10"><path d="M6 0.5 L1 5 L6 9.5Z" fill="#bdbdbd"/></svg>
<svg class="a" style="left:53px;top:857px;" width="8" height="10" viewBox="0 0 8 10"><path d="M1.5 0.5 L6.5 5 L1.5 9.5Z" fill="#bdbdbd"/></svg>
<svg class="a" style="left:201px;top:853px;" width="19" height="19" viewBox="0 0 19 19"><circle cx="9.5" cy="9.5" r="8.5" fill="none" stroke="#6b6b6b" stroke-width="1.1"/><path d="M9.5 4.5 V14.5 M4.5 9.5 H14.5" stroke="#6b6b6b" stroke-width="1.4"/></svg>
<div class="a" style="left:1015.00px;top:856.00px;width:2.00px;height:2.00px;background:#a0a0a0"></div>
<div class="a" style="left:1015.00px;top:861.00px;width:2.00px;height:2.00px;background:#a0a0a0"></div>
<div class="a" style="left:1015.00px;top:866.00px;width:2.00px;height:2.00px;background:#a0a0a0"></div>
<div class="a" style="left:1033.00px;top:854.00px;width:463.00px;height:16.00px;background:#ffffff;border:1px solid #9a9a9a;border-right:none"></div>
<div class="a" style="left:1049.00px;top:854.00px;width:1.00px;height:16.00px;background:#9a9a9a"></div>
<svg class="a" style="left:1037px;top:857px;" width="8" height="10" viewBox="0 0 8 10"><path d="M6.5 0.5 L1.5 5 L6.5 9.5Z" fill="#222"/></svg>
<svg class="a" style="left:67px;top:880px;" width="16" height="16" viewBox="0 0 16 16"><circle cx="4" cy="4.4" r="3" fill="#6b6b6b"/><rect x="7.9" y="2.3" width="6.1" height="3" fill="#6b6b6b"/><rect x="2.6" y="6.3" width="11.4" height="8.4" fill="#fff" stroke="#777"/><path d="M5 7.3 H12.5 M5 9.8 H12.5 M5 12.5 H12.5" stroke="#777" stroke-width="1" stroke-dasharray="1.5 1.2"/></svg>
<svg class="a" style="left:100px;top:878px;" width="20" height="19" viewBox="0 0 20 19"><path d="M9.2 4.3 A5.6 5.6 0 1 0 12.3 14.8" stroke="#6b6b6b" stroke-width="1.3" fill="none" stroke-dasharray="3 0.8"/><path d="M9 3.5 V10" stroke="#777" stroke-width="1.2"/><path d="M7.3 8.4 L9 10.2 L10.7 8.4" stroke="#666" stroke-width="1.1" fill="none"/><path d="M9 9.9 H15.3" stroke="#777" stroke-width="1.2"/><path d="M14.2 7.8 L16.6 9.9 L14.2 12 Z" fill="#666"/><path d="M11.4 12.3 L17.2 18.5 M17.6 12.6 L11 18.6" stroke="#555" stroke-width="1.6"/></svg>
<div class="a" style="left:1366.00px;top:877.00px;width:44.00px;height:19.00px;background:#c6c6c6"></div>
<svg class="a" style="left:1379px;top:880px;" width="17" height="15" viewBox="0 0 17 15"><rect x="0.5" y="0.5" width="15" height="13" fill="none" stroke="#666"/><path d="M0.5 5 H15.5 M0.5 9.5 H15.5 M5.5 0.5 V13.5 M10.5 0.5 V13.5" stroke="#666"/></svg>
<svg class="a" style="left:1423px;top:880px;" width="16" height="15" viewBox="0 0 16 15"><rect x="0.5" y="0.5" width="14" height="13" fill="none" stroke="#777"/><rect x="3.5" y="2.5" width="8" height="9" fill="none" stroke="#777"/><path d="M5 5 H10 M5 7 H10 M5 9 H10" stroke="#999" stroke-width=".8"/></svg>
<svg class="a" style="left:1466px;top:880px;" width="16" height="15" viewBox="0 0 16 15"><path d="M0.5 13.5 V0.5 H15.5 V13.5" fill="none" stroke="#777"/><path d="M5.5 0.5 V8.5 H10.5 V0.5" fill="none" stroke="#777"/></svg></body></html>
